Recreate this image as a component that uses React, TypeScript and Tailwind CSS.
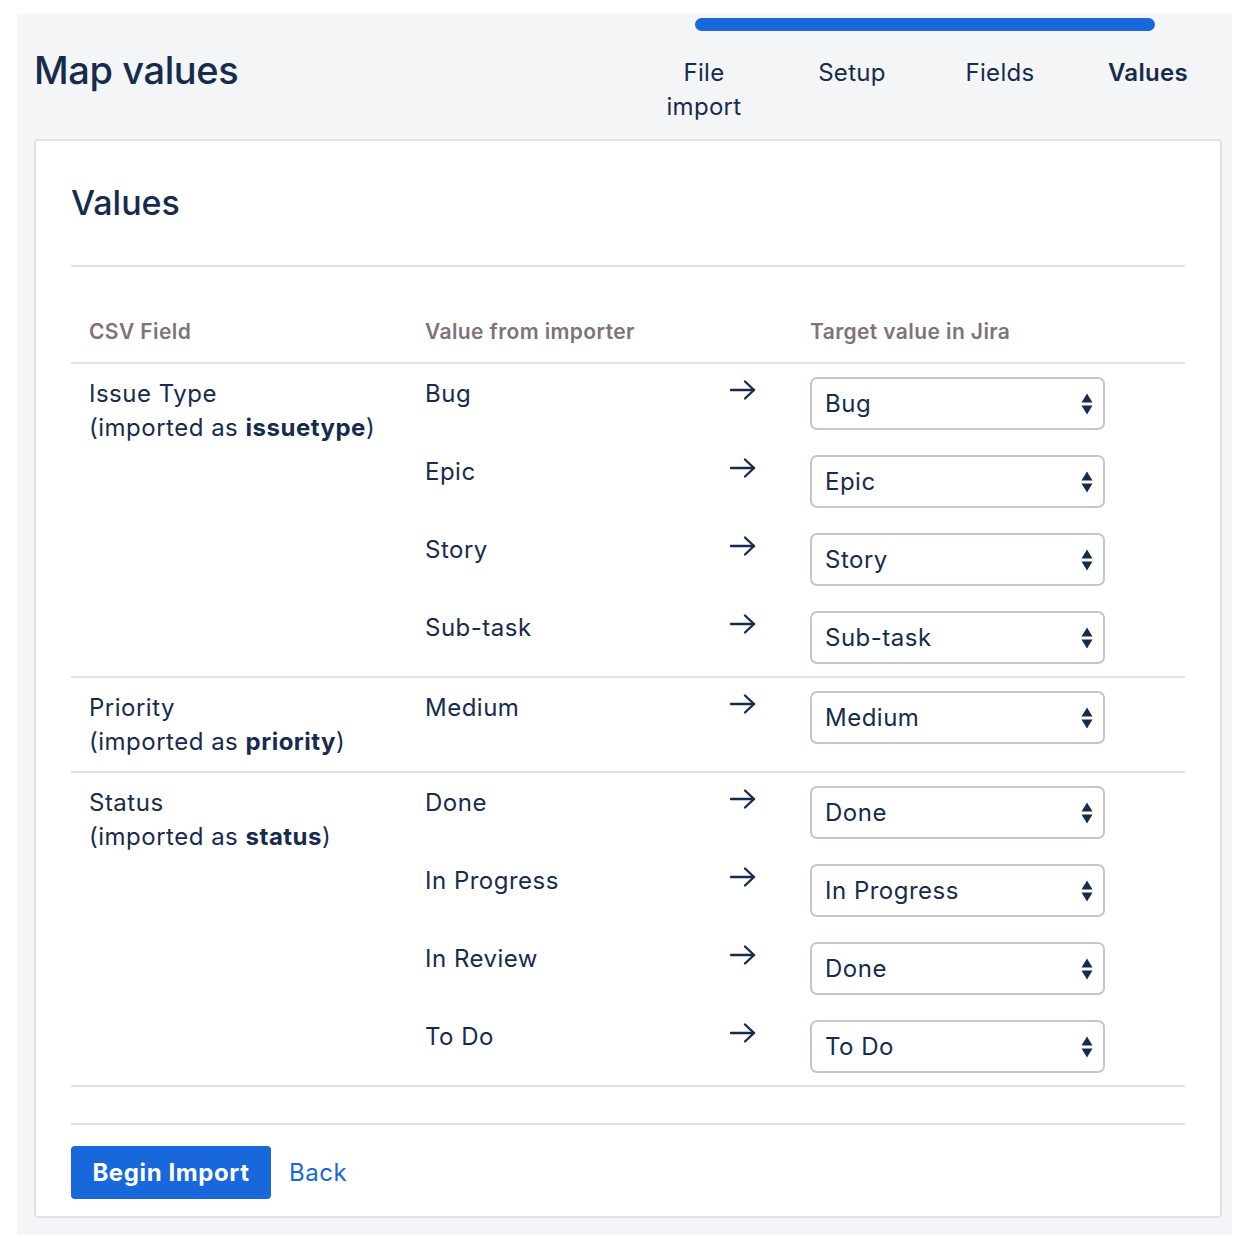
import React from 'react';

type Mapping = { from: string; to: string };
type Group = { label: string; key: string; rows: Mapping[] };

const groups: Group[] = [
  {
    label: 'Issue Type',
    key: 'issuetype',
    rows: [
      { from: 'Bug', to: 'Bug' },
      { from: 'Epic', to: 'Epic' },
      { from: 'Story', to: 'Story' },
      { from: 'Sub-task', to: 'Sub-task' },
    ],
  },
  {
    label: 'Priority',
    key: 'priority',
    rows: [{ from: 'Medium', to: 'Medium' }],
  },
  {
    label: 'Status',
    key: 'status',
    rows: [
      { from: 'Done', to: 'Done' },
      { from: 'In Progress', to: 'In Progress' },
      { from: 'In Review', to: 'Done' },
      { from: 'To Do', to: 'To Do' },
    ],
  },
];

const steps = ['File import', 'Setup', 'Fields', 'Values'];

function Arrow() {
  return (
    <svg width="28" height="22" viewBox="0 0 28 22" fill="none" aria-hidden="true">
      <path d="M2 11H25" stroke="#172b4d" strokeWidth="2.4" strokeLinecap="round" />
      <path d="M16 2.5L25 11L16 19.5" stroke="#172b4d" strokeWidth="2.4" strokeLinecap="round" strokeLinejoin="round" />
    </svg>
  );
}

function SelectBox({ value }: { value: string }) {
  return (
    <div className="flex h-[53px] w-[295px] items-center justify-between rounded-[7px] border-2 border-[#c1c7d0] bg-white pl-[13px] pr-[10px]">
      <span>{value}</span>
      <svg width="12" height="22" viewBox="0 0 12 22" aria-hidden="true">
        <path d="M6 0.5L11.5 9.5H0.5Z" fill="#172b4d" />
        <path d="M6 21.5L11.5 12.5H0.5Z" fill="#172b4d" />
      </svg>
    </div>
  );
}

export default function App() {
  return (
    <div
      className="bg-white pt-[14px] pl-[17px] pr-[8px] pb-[4px] text-[#172b4d]"
      style={{ fontFamily: 'Inter, "Noto Sans", sans-serif' }}
    >
      <div className="bg-[#f4f5f7] pl-[17px] pr-[10px] pb-[17px]">
        {/* Header */}
        <div className="flex h-[125px] items-start justify-between">
          <h1 className="mt-[32px] text-[38px] font-medium leading-[48px] tracking-[-0.4px]">Map values</h1>
          <div className="flex w-[592px] flex-col">
            <div className="ml-[65px] mt-[4px] h-[13px] w-[460px] rounded-full bg-[#1868db]" />
            <div className="mt-[25px] grid grid-cols-4">
              {steps.map((s, i) => (
                <div
                  key={s}
                  className={`px-[30px] text-center text-[24px] leading-[34px] tracking-[0.3px] ${i === 3 ? 'font-semibold' : ''}`}
                >
                  {s}
                </div>
              ))}
            </div>
          </div>
        </div>

        {/* Card */}
        <div className="rounded-[4px] border-2 border-[#dfe1e6] bg-white px-[35px] pb-[17px] text-[24px] leading-[34px] tracking-[0.5px]">
          <h2 className="pt-[41px] pb-[41px] text-[34px] font-medium leading-[42px] tracking-[0px]">Values</h2>
          <div className="h-[2px] bg-[#dfe1e6]" />

          <div className="grid grid-cols-[354px_304px_81px_295px] border-b-2 border-[#dfe1e6] pt-[53px] pb-[18px] text-[21px] font-semibold leading-[24px] tracking-[0.4px] text-[#7f727c]">
            <div className="pl-[18px]">CSV Field</div>
            <div>Value from importer</div>
            <div />
            <div>Target value in Jira</div>
          </div>

          {groups.map((g) => (
            <div key={g.key} className="grid grid-cols-[354px_1fr] border-b-2 border-[#dfe1e6] pt-[13px] pb-[12px]">
              <div className="pl-[18px]">
                <div>{g.label}</div>
                <div>
                  (imported as <span className="font-bold">{g.key}</span>)
                </div>
              </div>
              <div className="flex flex-col gap-[25px]">
                {g.rows.map((r, i) => (
                  <div key={i} className="grid grid-cols-[304px_81px_295px]">
                    <div>{r.from}</div>
                    <div className="pt-[2px]">
                      <Arrow />
                    </div>
                    <SelectBox value={r.to} />
                  </div>
                ))}
              </div>
            </div>
          ))}

          <div className="mt-[36px] h-[2px] bg-[#dfe1e6]" />

          <div className="mt-[21px] flex items-center gap-[18px]">
            <button className="h-[53px] w-[200px] rounded-[4px] bg-[#1868db] text-[24px] font-bold tracking-[0.6px] text-white">
              Begin Import
            </button>
            <a className="text-[24px] text-[#1868db]" href="#">
              Back
            </a>
          </div>
        </div>
      </div>
    </div>
  );
}
